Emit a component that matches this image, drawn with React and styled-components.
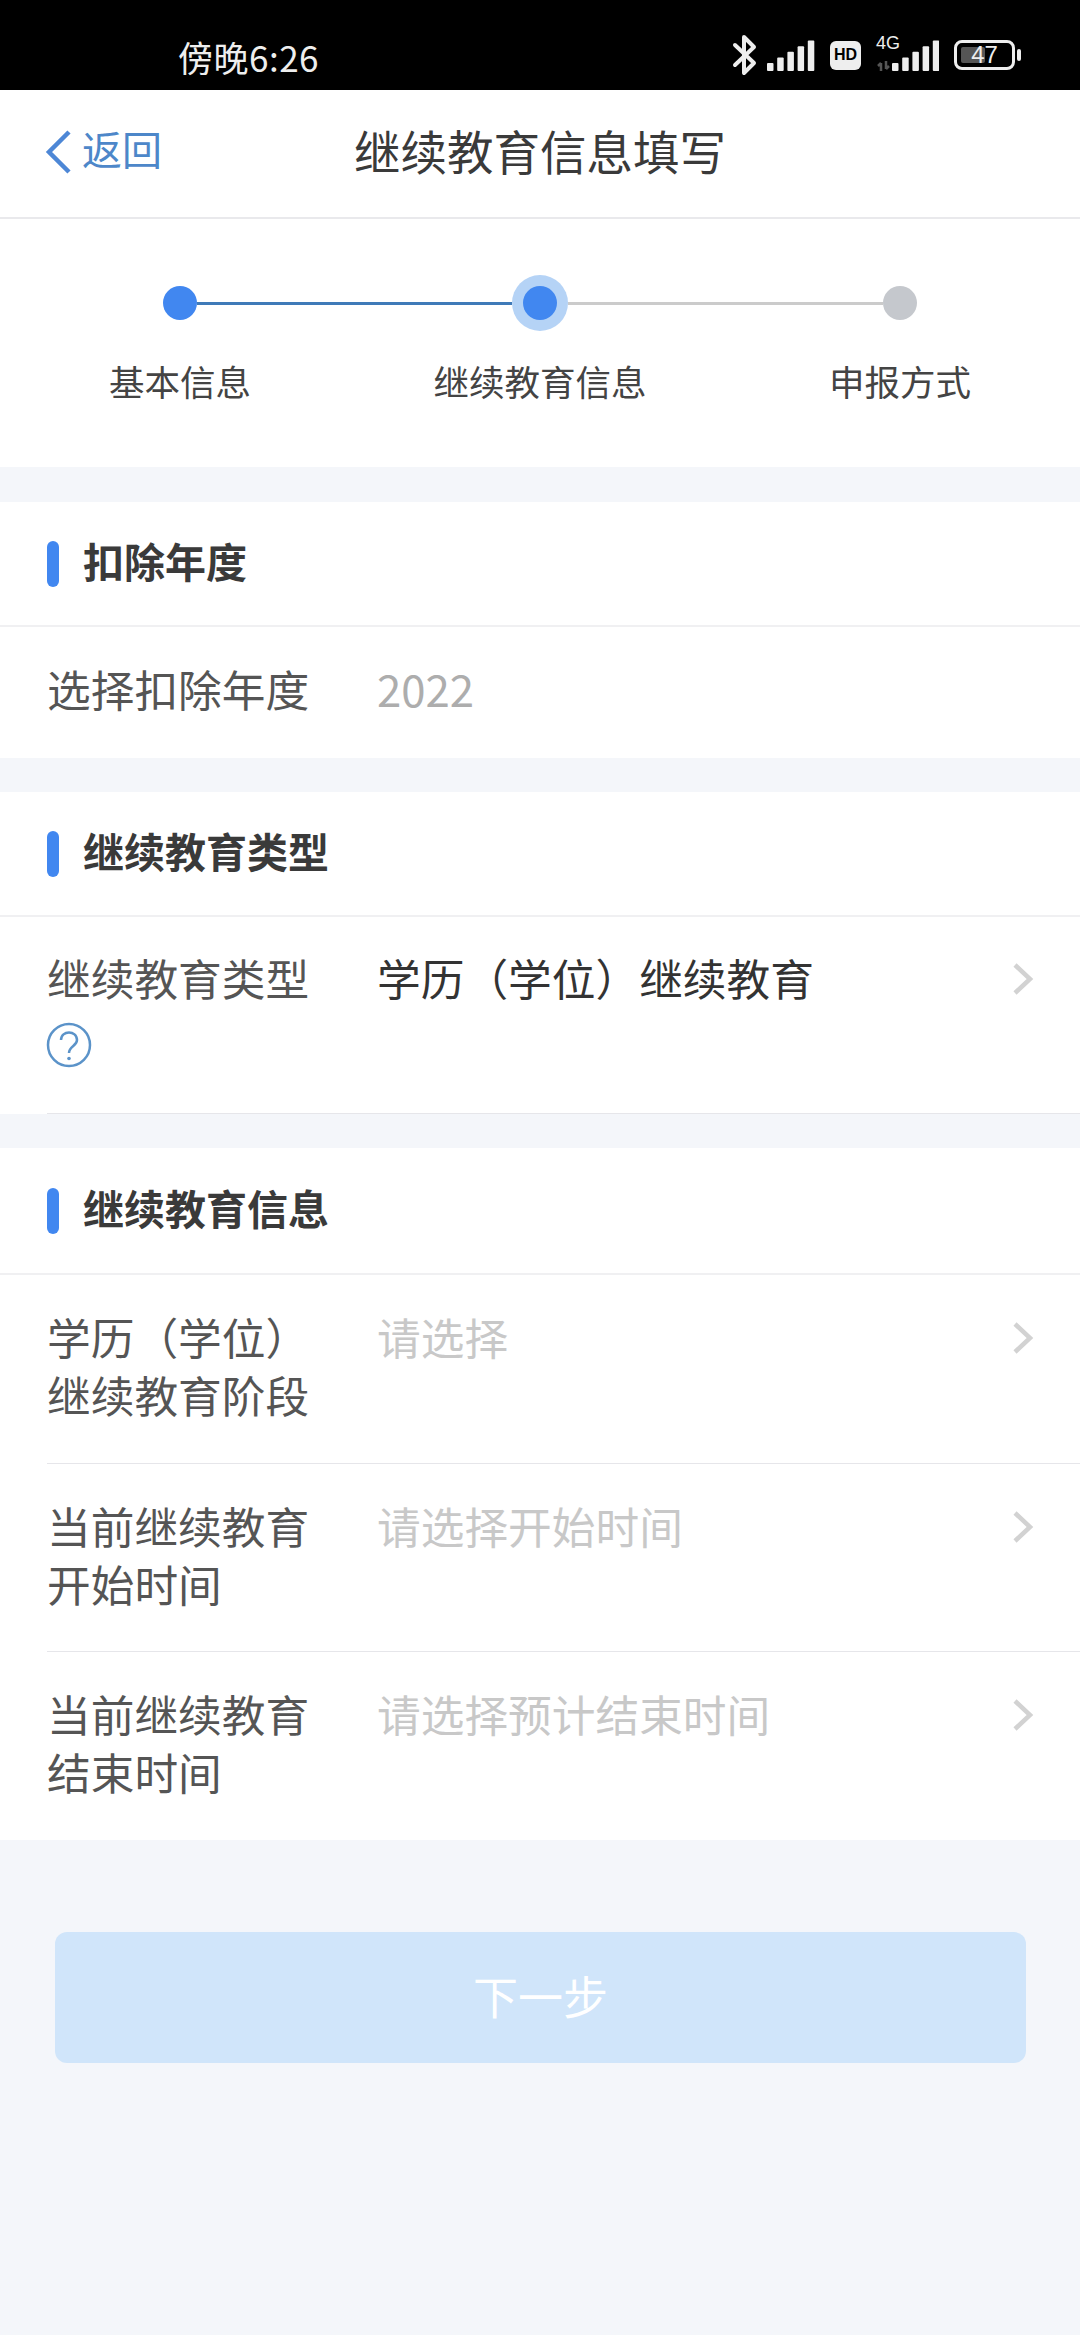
import React from "react";
import styled, { createGlobalStyle } from "styled-components";

const GlobalStyle = createGlobalStyle`
  html, body {
    margin: 0;
    padding: 0;
    background-color: #f4f6fa;
  }
  * {
    box-sizing: border-box;
  }
`;

const Page = styled.div`
  width: 1080px;
  height: 2335px;
  overflow: hidden;
  background-color: #f4f6fa;
  font-family: "Noto Sans CJK SC", "Noto Sans", sans-serif;
`;

const StatusBar = styled.div`
  display: flex;
  justify-content: space-between;
  align-items: center;
  height: 90px;
  padding: 24px 65px 0 178px;
  background-color: #000;
  color: #eee;
`;

const StatusTime = styled.span`
  font-size: 35px;
  line-height: 40px;
  letter-spacing: 0.5px;
`;

const StatusIcons = styled.div`
  display: flex;
  align-items: center;
  margin-top: -4px;
`;

const HdBadge = styled.span`
  display: flex;
  justify-content: center;
  align-items: center;
  width: 31px;
  height: 29px;
  margin: 0 15px;
  background-color: #eee;
  border-radius: 6px;
  color: #000;
  font-family: "Liberation Sans", sans-serif;
  font-size: 16px;
  font-weight: 700;
`;

const NetWrap = styled.div`
  position: relative;
  width: 63px;
  height: 32px;
`;

const NetLabel = styled.span`
  position: absolute;
  left: 0;
  top: -5px;
  font-family: "Liberation Sans", sans-serif;
  font-size: 18px;
  line-height: 18px;
`;

const Battery = styled.div`
  position: relative;
  display: flex;
  justify-content: center;
  align-items: center;
  width: 61px;
  height: 30px;
  margin-left: 15px;
  border: 3px solid #eee;
  border-radius: 8px;
  font-family: "Liberation Sans", sans-serif;
  font-size: 24px;
  &::before {
    content: "";
    position: absolute;
    left: 4px;
    top: 4px;
    bottom: 4px;
    width: 24px;
    background-color: #555;
    border-radius: 2px;
  }
  &::after {
    content: "";
    position: absolute;
    right: -9px;
    top: 6px;
    width: 4px;
    height: 12px;
    background-color: #eee;
    border-radius: 2px;
  }
`;

const BatteryValue = styled.span`
  position: relative;
  line-height: 24px;
`;

const Header = styled.header`
  display: grid;
  grid-template-columns: 1fr auto 1fr;
  align-items: center;
  height: 129px;
  padding: 0 45px 8px;
  background-color: #fff;
  border-bottom: 2px solid #e9e9ec;
`;

const BackLink = styled.div`
  display: flex;
  align-items: center;
  gap: 10px;
  margin-top: -3px;
  color: #4d87c9;
  font-size: 40px;
`;

const HeaderTitle = styled.h1`
  margin: 0;
  color: #3a3a3a;
  font-size: 46.5px;
  font-weight: 400;
`;

const Stepper = styled.section`
  height: 248px;
  padding-top: 56px;
  background-color: #fff;
`;

const Track = styled.div`
  display: flex;
  align-items: center;
  padding: 0 163px;
`;

const Dot = styled.span`
  flex: none;
  width: 34px;
  height: 34px;
  background-color: ${(props) => (props.$done ? "#4187f0" : "#c5c8cd")};
  border-radius: 50%;
`;

const Halo = styled.span`
  flex: none;
  display: flex;
  justify-content: center;
  align-items: center;
  width: 56px;
  height: 56px;
  background-color: #b5d3f6;
  border-radius: 50%;
`;

const Line = styled.span`
  flex: 1;
  height: 3px;
  background-color: ${(props) => (props.$done ? "#3f7ab8" : "#cbcbcb")};
`;

const StepLabels = styled.div`
  display: grid;
  grid-template-columns: repeat(3, 1fr);
  margin-top: 25px;
`;

const StepLabel = styled.span`
  color: #444;
  font-size: 35.5px;
  line-height: 50px;
  text-align: center;
`;

const Section = styled.section`
  margin-top: ${(props) => props.$gap || 34}px;
  background-color: #fff;
`;

const SectionHead = styled.div`
  display: flex;
  align-items: center;
  gap: 24px;
  height: ${(props) => props.$height || 125}px;
  padding-left: 47px;
  border-bottom: 2px solid #f0f0f2;
`;

const AccentBar = styled.span`
  flex: none;
  width: 12px;
  height: 46px;
  background-color: #4187f0;
  border-radius: 6px;
`;

const SectionTitle = styled.h2`
  margin: -8px 0 0;
  color: #3a3a3a;
  font-size: 41px;
  font-weight: 700;
`;

const Row = styled.div`
  display: grid;
  grid-template-columns: 330px 1fr 68px;
  height: ${(props) => props.$height}px;
  margin-left: 47px;
  padding-top: ${(props) => props.$top || 32}px;
  border-bottom: ${(props) => (props.$line ? "1px solid #e6e6ea" : "none")};
`;

const RowLabel = styled.div`
  color: #555;
  font-size: 43.7px;
  line-height: 58px;
`;

const RowValue = styled.div`
  color: ${(props) => props.$color || "#333"};
  font-size: 43.7px;
  line-height: 58px;
`;

const HelpIcon = styled.svg`
  display: block;
  width: 46px;
  height: 46px;
  margin: 16px 0 0 -1px;
`;

const Chevron = styled.svg`
  display: block;
  width: 22px;
  height: 34px;
  margin-top: 14px;
`;

const ButtonArea = styled.div`
  padding: 92px 54px 0 55px;
`;

const NextButton = styled.button`
  display: block;
  width: 100%;
  height: 131px;
  padding: 0 0 5px;
  background-color: #d0e5fa;
  border: none;
  border-radius: 12px;
  color: #fff;
  font-family: inherit;
  font-size: 45px;
`;

function Bars({ x = 0 }) {
  return [0, 1, 2, 3, 4].map((i) => (
    <rect
      key={i}
      x={x + i * 10.2}
      y={24 - i * 5.6}
      width="6.5"
      height={8 + i * 5.6}
      rx="1"
      fill="#eee"
    />
  ));
}

function RowArrow() {
  return (
    <Chevron viewBox="0 0 22 34">
      <path d="M3 3 L18 17 L3 31" fill="none" stroke="#d2d2d2" strokeWidth="4.5" />
    </Chevron>
  );
}

export default function App() {
  return (
    <Page>
      <GlobalStyle />
      <StatusBar>
        <StatusTime>傍晚6:26</StatusTime>
        <StatusIcons>
          <svg width="26" height="42" viewBox="0 0 26 42" style={{ marginRight: 9 }}>
            <path
              d="M3 11 L22 29 L12 39 L12 3 L22 13 L3 31"
              fill="none"
              stroke="#eee"
              strokeWidth="4"
              strokeLinecap="round"
              strokeLinejoin="round"
            />
          </svg>
          <svg width="48" height="32" viewBox="0 0 48 32">
            <Bars />
          </svg>
          <HdBadge>HD</HdBadge>
          <NetWrap>
            <NetLabel>4G</NetLabel>
            <svg width="63" height="32" viewBox="0 0 63 32">
              <path d="M5 24 V32 M2 27 L5 24 M10 22 V30 M13 27 L10 30" stroke="#555" strokeWidth="2.5" fill="none" />
              <Bars x={16} />
            </svg>
          </NetWrap>
          <Battery>
            <BatteryValue>47</BatteryValue>
          </Battery>
        </StatusIcons>
      </StatusBar>

      <Header>
        <BackLink>
          <svg width="27" height="46" viewBox="0 0 27 46" style={{ marginTop: 8 }}>
            <path d="M24 3 L4 23 L24 43" fill="none" stroke="#4d87d6" strokeWidth="4.5" />
          </svg>
          返回
        </BackLink>
        <HeaderTitle>继续教育信息填写</HeaderTitle>
      </Header>

      <Stepper>
        <Track>
          <Dot $done />
          <Line $done />
          <Halo>
            <Dot $done />
          </Halo>
          <Line />
          <Dot />
        </Track>
        <StepLabels>
          <StepLabel>基本信息</StepLabel>
          <StepLabel>继续教育信息</StepLabel>
          <StepLabel>申报方式</StepLabel>
        </StepLabels>
      </Stepper>

      <Section $gap={35}>
        <SectionHead>
          <AccentBar />
          <SectionTitle>扣除年度</SectionTitle>
        </SectionHead>
        <Row $height={131}>
          <RowLabel>选择扣除年度</RowLabel>
          <RowValue $color="#adadad">2022</RowValue>
        </Row>
      </Section>

      <Section>
        <SectionHead>
          <AccentBar />
          <SectionTitle>继续教育类型</SectionTitle>
        </SectionHead>
        <Row $height={197} $top={31} $line>
          <RowLabel>
            继续教育类型
            <HelpIcon viewBox="0 0 46 46">
              <circle cx="23" cy="23" r="21" fill="none" stroke="#5b93c9" strokeWidth="2.5" />
              <path
                d="M15 18 C15 8 31 8 31 18 C31 24 23 24 23 31"
                fill="none"
                stroke="#5b93c9"
                strokeWidth="2.5"
              />
              <circle cx="23" cy="36.5" r="1.8" fill="#5b93c9" />
            </HelpIcon>
          </RowLabel>
          <RowValue>学历（学位）继续教育</RowValue>
          <RowArrow />
        </Row>
      </Section>

      <Section>
        <SectionHead $height={127}>
          <AccentBar />
          <SectionTitle>继续教育信息</SectionTitle>
        </SectionHead>
        <Row $height={189} $line>
          <RowLabel>
            学历（学位）
            <br />
            继续教育阶段
          </RowLabel>
          <RowValue $color="#c8c8c8">请选择</RowValue>
          <RowArrow />
        </Row>
        <Row $height={188} $line>
          <RowLabel>
            当前继续教育
            <br />
            开始时间
          </RowLabel>
          <RowValue $color="#c8c8c8">请选择开始时间</RowValue>
          <RowArrow />
        </Row>
        <Row $height={188}>
          <RowLabel>
            当前继续教育
            <br />
            结束时间
          </RowLabel>
          <RowValue $color="#c8c8c8">请选择预计结束时间</RowValue>
          <RowArrow />
        </Row>
      </Section>

      <ButtonArea>
        <NextButton>下一步</NextButton>
      </ButtonArea>
    </Page>
  );
}
